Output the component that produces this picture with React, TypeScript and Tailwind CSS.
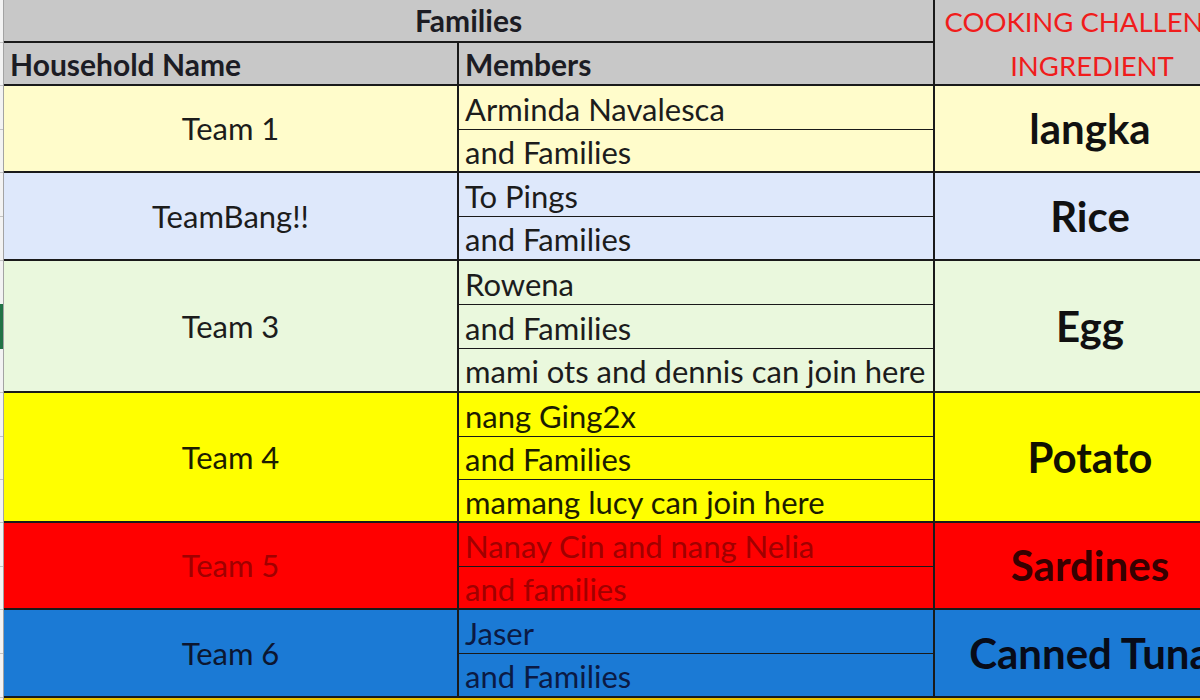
const font = { fontFamily: "Lato, 'Open Sans', sans-serif" };

type Group = {
  team: string;
  members: string[];
  heights: number[];
  ingredient: string;
  bg: string;
  teamColor: string;
  memberColor: string;
  ingColor: string;
};

const groups: Group[] = [
  {
    team: "Team 1",
    members: ["Arminda Navalesca", "and Families"],
    heights: [44, 43],
    ingredient: "langka",
    bg: "bg-[#fffccb]",
    teamColor: "text-[#1c1c1c]",
    memberColor: "text-[#1c1c1c]",
    ingColor: "text-[#111111]",
  },
  {
    team: "TeamBang!!",
    members: ["To Pings", "and Families"],
    heights: [44, 44],
    ingredient: "Rice",
    bg: "bg-[#dee8fb]",
    teamColor: "text-[#1c1c1c]",
    memberColor: "text-[#1c1c1c]",
    ingColor: "text-[#111111]",
  },
  {
    team: "Team 3",
    members: ["Rowena", "and Families", "mami ots and dennis can join here"],
    heights: [44, 44, 44],
    ingredient: "Egg",
    bg: "bg-[#eaf8dd]",
    teamColor: "text-[#1c1c1c]",
    memberColor: "text-[#1c1c1c]",
    ingColor: "text-[#111111]",
  },
  {
    team: "Team 4",
    members: ["nang Ging2x", "and Families", "mamang lucy can join here"],
    heights: [44, 43, 43],
    ingredient: "Potato",
    bg: "bg-[#ffff00]",
    teamColor: "text-[#1c1c00]",
    memberColor: "text-[#1c1c00]",
    ingColor: "text-[#111100]",
  },
  {
    team: "Team 5",
    members: ["Nanay Cin and nang Nelia", "and families"],
    heights: [44, 43],
    ingredient: "Sardines",
    bg: "bg-[#ff0000]",
    teamColor: "text-[#a00000]",
    memberColor: "text-[#a00000]",
    ingColor: "text-[#360000]",
  },
  {
    team: "Team 6",
    members: ["Jaser", "and Families"],
    heights: [44, 44],
    ingredient: "Canned Tuna",
    bg: "bg-[#1b7ad5]",
    teamColor: "text-[#0c1630]",
    memberColor: "text-[#0b1a44]",
    ingColor: "text-[#070b18]",
  },
];

function Gutter({ heights }: { heights: number[] }) {
  return (
    <div className="flex flex-col w-[4px] shrink-0 bg-[#f3f3f3] border-r border-[#a3a3a3]">
      {heights.map((h, i) => (
        <div key={i} style={{ height: h }} className="border-b border-[#c4c4c4]" />
      ))}
    </div>
  );
}

function TeamGroup({ g, selected }: { g: Group; selected?: boolean }) {
  return (
    <div className="flex">
      <div className="relative flex flex-col w-[4px] shrink-0 bg-[#f3f3f3] border-r border-[#a3a3a3]">
        {g.heights.map((h, i) => (
          <div key={i} style={{ height: h }} className="border-b border-[#c4c4c4]" />
        ))}
        {selected && (
          <div className="absolute left-0 top-[43px] w-[3px] h-[45px] bg-[#217346]" />
        )}
      </div>
      <div className={`flex flex-1 border-b-2 border-[#1a1a1a] ${g.bg}`}>
        <div
          className={`w-[455px] shrink-0 flex items-center justify-center border-r-2 border-[#1a1a1a] text-[31px] ${g.teamColor}`}
        >
          {g.team}
        </div>
        <div className="w-[476px] shrink-0 flex flex-col border-r-2 border-[#1a1a1a]">
          {g.members.map((m, i) => (
            <div
              key={m}
              style={{ height: i === g.members.length - 1 ? g.heights[i] - 2 : g.heights[i] }}
              className={`flex items-center pl-[6px] pt-[3px] whitespace-nowrap text-[31px] ${g.memberColor} ${
                i < g.members.length - 1 ? "border-b-[1.5px] border-[#1a1a1a]" : ""
              }`}
            >
              {m}
            </div>
          ))}
        </div>
        <div
          className={`w-[310px] shrink-0 flex items-center justify-center whitespace-nowrap font-bold text-[42px] ${g.ingColor}`}
        >
          {g.ingredient}
        </div>
      </div>
    </div>
  );
}

export default function App() {
  return (
    <div className="w-[1200px] h-[700px] overflow-hidden bg-white" style={font}>
      <div className="w-[1250px]">
        {/* header */}
        <div className="flex h-[86px]">
          <Gutter heights={[43, 43]} />
          <div className="flex flex-1 bg-[#c8c8c8] border-b-2 border-[#1a1a1a]">
            <div className="w-[931px] shrink-0 flex flex-col border-r-2 border-[#1a1a1a]">
              <div className="h-[43px] flex items-center justify-center font-bold text-[30px] text-[#1c1c24] border-b-2 border-[#1a1a1a]">
                Families
              </div>
              <div className="h-[41px] flex font-bold text-[30px] text-[#1c1c24]">
                <div className="w-[455px] shrink-0 flex items-center pl-[6px] pt-[2px] border-r-2 border-[#1a1a1a]">
                  Household Name
                </div>
                <div className="flex items-center pl-[6px] pt-[2px]">Members</div>
              </div>
            </div>
            <div className="w-[310px] shrink-0 flex flex-col items-center justify-center pt-[4px] pl-[4px] text-[27.5px] leading-[44px] text-[#f01c1c] whitespace-nowrap">
              <div>COOKING CHALLENGE</div>
              <div>INGREDIENT</div>
            </div>
          </div>
        </div>
        {groups.map((g, i) => (
          <TeamGroup key={g.team} g={g} selected={i === 2} />
        ))}
        <div className="flex h-[4px]">
          <div className="w-[4px] bg-[#f3f3f3] border-r border-[#a3a3a3]" />
          <div className="flex-1 bg-[#e8c400]" />
        </div>
      </div>
    </div>
  );
}
